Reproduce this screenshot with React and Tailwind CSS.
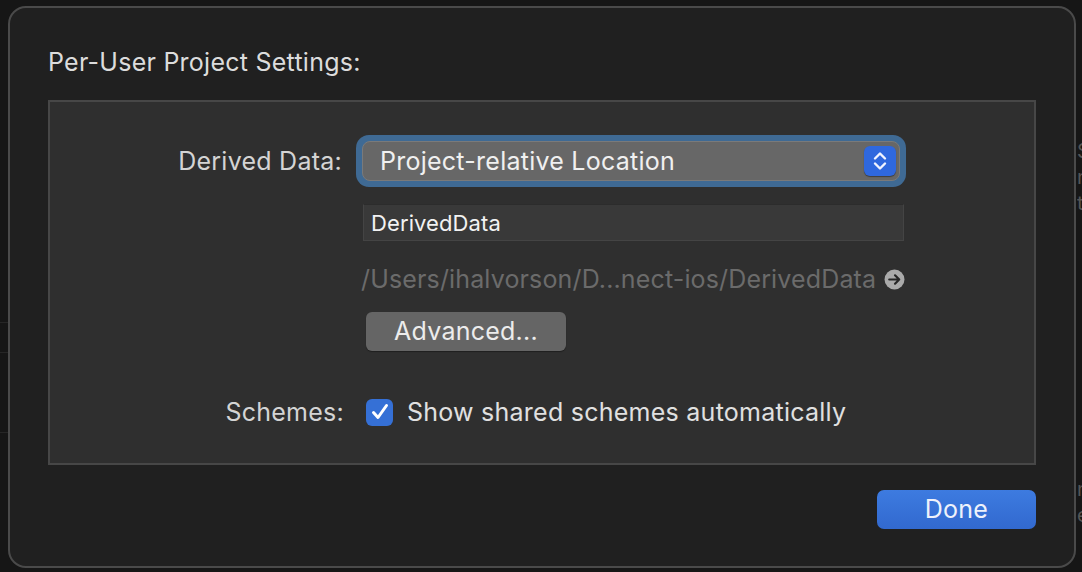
import React from "react";

const font = { fontFamily: "Inter, 'Noto Sans', sans-serif", letterSpacing: "0.25px" };

function Stepper() {
  return (
    <div className="flex h-[30px] w-[32px] items-center justify-center rounded-[6px] bg-[#2f68de] shadow-[0_1px_1px_rgba(0,0,0,0.4)]">
      <svg width="16" height="22" viewBox="0 0 16 22" fill="none">
        <path d="M3 8.5 L8 3.5 L13 8.5" stroke="#f2f4ff" strokeWidth="2.4" strokeLinecap="round" strokeLinejoin="round" />
        <path d="M3 13.5 L8 18.5 L13 13.5" stroke="#f2f4ff" strokeWidth="2.4" strokeLinecap="round" strokeLinejoin="round" />
      </svg>
    </div>
  );
}

function ArrowCircle() {
  return (
    <svg width="21" height="21" viewBox="0 0 20 20">
      <circle cx="10" cy="10" r="9.5" fill="#aaaaaa" />
      <path d="M5 10 H14.5 M10.5 6 L14.5 10 L10.5 14" stroke="#262626" strokeWidth="2.1" fill="none" strokeLinecap="round" strokeLinejoin="round" />
    </svg>
  );
}

function Checkbox() {
  return (
    <div className="flex h-[27px] w-[27px] items-center justify-center rounded-[6px] bg-[#3570d6]">
      <svg width="20" height="20" viewBox="0 0 20 20" fill="none">
        <path d="M3.5 10.5 L8 15.5 L16.5 3.5" stroke="#ffffff" strokeWidth="3" strokeLinecap="round" strokeLinejoin="round" />
      </svg>
    </div>
  );
}

export default function App() {
  return (
    <div className="flex h-[572px] w-[1082px] overflow-hidden bg-[#161616]" style={font}>
      <div className="flex w-[8px] flex-col">
        <div className="mt-[322px] h-px bg-[#262626]" />
        <div className="mt-[29px] h-px bg-[#262626]" />
        <div className="mt-[79px] h-px bg-[#262626]" />
      </div>

      <div className="mt-[6px] flex h-[562px] w-[1068px] flex-col rounded-[18px] border-2 border-[#4a4a4a] bg-[#202020] px-[38px]">
        <h1 className="mt-[39px] text-[25px] leading-[30px] text-[#dcdcdc]">Per-User Project Settings:</h1>

        <div className="mt-[23px] flex h-[365px] flex-col border-2 border-[#474747] bg-[#2f2f2f] pt-[33px]">
          <div className="flex items-center">
            <div className="w-[292px] text-right text-[25px] leading-[30px] text-[#d4d4d4]">Derived Data:</div>
            <div className="ml-[14px] rounded-[13px] bg-[#3f6a94] p-[6px]">
              <div className="flex h-[40px] w-[538px] items-center justify-between rounded-[8px] border border-[#7a7a7a] bg-[#676767] pl-[17px] pr-[3px]">
                <span className="text-[25px] leading-[30px] text-[#f0f0f0]">Project-relative Location</span>
                <Stepper />
              </div>
            </div>
          </div>

          <div className="ml-[313px] mt-[17px] flex h-[37px] w-[541px] items-center border border-[#444] border-t-[#2c2c2c] bg-[#393939] pl-[7px]">
            <span className="text-[22px] leading-[26px] tracking-[0.1px] text-[#f2f2f2]">DerivedData</span>
          </div>

          <div className="ml-[311px] mt-[23px] flex items-center gap-[8px]">
            <span className="text-[25px] leading-[30px] tracking-[0.15px] text-[#6b6b6b]">/Users/ihalvorson/D...nect-ios/DerivedData</span>
            <ArrowCircle />
          </div>

          <button className="ml-[316px] mt-[18px] flex h-[39px] w-[200px] items-center justify-center rounded-[6px] bg-[#656565] pb-[1px] text-[25px] leading-[30px] text-[#ececec] shadow-[0_1px_1px_rgba(0,0,0,0.35)]">
            Advanced...
          </button>

          <div className="mt-[46px] flex items-center">
            <div className="w-[294px] text-right text-[25px] leading-[30px] text-[#d4d4d4]">Schemes:</div>
            <div className="ml-[22px]">
              <Checkbox />
            </div>
            <span className="ml-[14px] text-[25px] leading-[30px] text-[#e0e0e0]">Show shared schemes automatically</span>
          </div>
        </div>

        <div className="mt-[25px] flex justify-end">
          <button className="flex h-[39px] w-[159px] items-center justify-center rounded-[7px] bg-gradient-to-b from-[#3d7be0] to-[#3269cf] pb-[2px] text-[25px] leading-[30px] text-[#eef2fb]">
            Done
          </button>
        </div>
      </div>

      <div className="ml-[1px] flex w-[5px] flex-col overflow-hidden text-[20px] leading-[26px] text-[#555]">
        <span className="mt-[138px]">S</span>
        <span>n</span>
        <span>t</span>
        <span className="mt-[260px]">n</span>
        <span>e</span>
      </div>
    </div>
  );
}
